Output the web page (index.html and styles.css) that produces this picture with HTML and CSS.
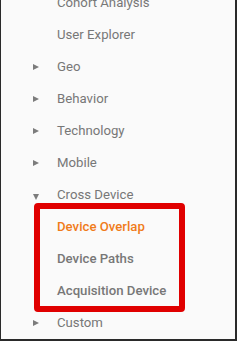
FILE: index.html
```html
<!DOCTYPE html>
<html>
<head>
<meta charset="utf-8">
<link rel="stylesheet" href="styles.css">
</head>
<body>
<div class="frame">
  <ul class="nav">
    <li class="row"><span class="arrow"></span><span class="label">Cohort Analysis</span><span class="beta">BETA</span></li>
    <li class="row"><span class="arrow"></span><span class="label">User Explorer</span></li>
    <li class="row"><span class="arrow"><span class="tri-right"></span></span><span class="label">Geo</span></li>
    <li class="row"><span class="arrow"><span class="tri-right"></span></span><span class="label">Behavior</span></li>
    <li class="row"><span class="arrow"><span class="tri-right"></span></span><span class="label">Technology</span></li>
    <li class="row"><span class="arrow"><span class="tri-right"></span></span><span class="label">Mobile</span></li>
    <li class="row"><span class="arrow"><span class="tri-down"></span></span><span class="label">Cross Device</span></li>
    <li class="row sub active"><span class="arrow"></span><span class="label">Device Overlap</span></li>
    <li class="row sub"><span class="arrow"></span><span class="label">Device Paths</span></li>
    <li class="row sub"><span class="arrow"></span><span class="label">Acquisition Device</span></li>
    <li class="row"><span class="arrow"><span class="tri-right"></span></span><span class="label">Custom</span></li>
  </ul>
  <div class="highlight"></div>
</div>
</body>
</html>
```
FILE: styles.css
```css
html, body {
  margin: 0;
  padding: 0;
}
body {
  background: #fafafa;
  font-family: Roboto, "Liberation Sans", sans-serif;
}
.frame {
  position: relative;
  width: 237px;
  height: 341px;
  box-sizing: border-box;
  border-left: 1px solid #2a2a2a;
  border-right: 2px solid #2a2a2a;
  border-bottom: 2px solid #2a2a2a;
  background: #fafafa;
  overflow: hidden;
}
.nav {
  list-style: none;
  margin: -13px 0 0 0;
  padding: 0;
}
.row {
  display: flex;
  align-items: center;
  height: 32px;
  line-height: 32px;
  padding-left: 31px;
  font-size: 13.2px;
  color: #777777;
  white-space: nowrap;
}
.arrow {
  width: 25px;
  height: 32px;
  display: flex;
  align-items: center;
  flex: none;
}
.tri-right {
  width: 0;
  height: 0;
  border-top: 3.5px solid transparent;
  border-bottom: 3.5px solid transparent;
  border-left: 6.5px solid #7c7c7c;
  margin-left: 1px;
  margin-top: -1px;
}
.tri-down {
  width: 0;
  height: 0;
  border-left: 3.5px solid transparent;
  border-right: 3.5px solid transparent;
  border-top: 6px solid #7c7c7c;
  margin-left: 1px;
  margin-top: 3px;
}
.sub .label {
  font-weight: 500;
}
.active .label {
  color: #f07c1a;
}
.beta {
  font-size: 9px;
  font-weight: 700;
  color: #e8710a;
  margin-left: 4px;
  position: relative;
  top: -9px;
}
.highlight {
  position: absolute;
  left: 33px;
  top: 203px;
  width: 151px;
  height: 109px;
  box-sizing: border-box;
  border: 6px solid #e00000;
  border-radius: 4px;
}
```
